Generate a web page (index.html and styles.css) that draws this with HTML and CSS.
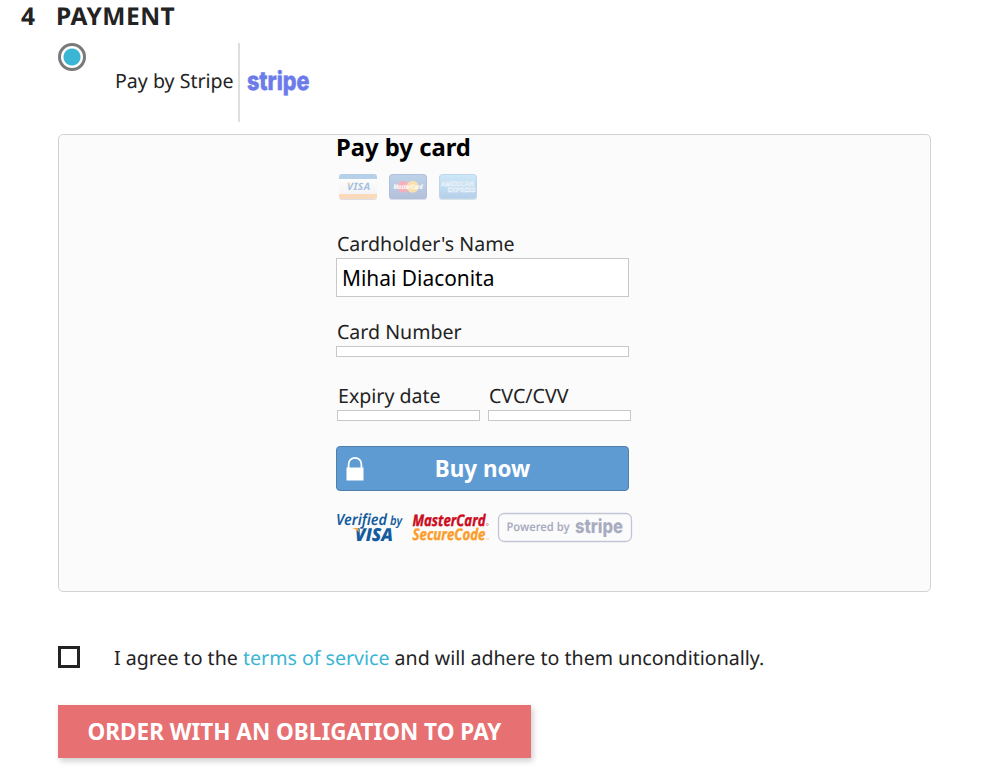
FILE: index.html
```
<!DOCTYPE html>
<html lang="en">
  <head>
    <meta charset="utf-8">
    <title>Payment</title>
    <link rel="stylesheet" href="styles.css">
  </head>

  <body>
    <h1 class="step-title"><span class="step-number">4</span>Payment</h1>

    <div class="content">
      <div class="payment-option">
        <input type="radio" name="payment-option" id="pay-stripe" class="radio" checked>
        <label for="pay-stripe">
          <span>Pay by Stripe</span>
          <svg class="stripe-logo" width="70" height="40" viewBox="0 0 70 40">
            <text x="1" y="27" textLength="62.5" lengthAdjust="spacingAndGlyphs">stripe</text>
          </svg>
        </label>
      </div>

      <div class="card-panel">
        <form class="card-form" onsubmit="return false">
          <h2>Pay by card</h2>

          <div class="cards">
            <svg width="38" height="27" viewBox="0 0 38 27">
              <defs>
                <linearGradient id="visa-bg" x2="0" y2="1">
                  <stop offset="0" stop-color="#fff"/>
                  <stop offset="1" stop-color="#f1f1f3"/>
                </linearGradient>
              </defs>
              <rect y="1" width="38" height="25" rx="3" fill="#dcdfe3"/>
              <rect width="38" height="25" rx="3" fill="url(#visa-bg)"/>
              <path d="M0 5V3a3 3 0 0 1 3-3h32a3 3 0 0 1 3 3v2z" fill="#b5d0e8"/>
              <path d="M0 20h38v2a3 3 0 0 1-3 3H3a3 3 0 0 1-3-3z" fill="#fadabb"/>
              <text class="visa" x="8" y="16.2" textLength="23">VISA</text>
              <path d="M7.5 9h3l1 3z" fill="#f8d5a8"/>
            </svg>
            <svg width="38" height="27" viewBox="0 0 38 27">
              <defs>
                <linearGradient id="mc-bg" x2="0" y2="1">
                  <stop offset="0" stop-color="#bdd3ea"/>
                  <stop offset="1" stop-color="#b4c0da"/>
                </linearGradient>
              </defs>
              <rect y="1" width="38" height="25" rx="3" fill="#d9dde5"/>
              <rect x=".5" y=".5" width="37" height="24" rx="3" fill="url(#mc-bg)" stroke="#b0bfda"/>
              <circle cx="14.3" cy="12.7" r="6" fill="#f4b1bc"/>
              <circle cx="23.7" cy="12.7" r="6" fill="#fae0ac"/>
              <text class="mastercard" x="4.5" y="15" textLength="29" lengthAdjust="spacingAndGlyphs">MasterCard</text>
            </svg>
            <svg width="38" height="27" viewBox="0 0 38 27">
              <defs>
                <linearGradient id="amex-bg" x2="0" y2="1">
                  <stop offset="0" stop-color="#cde8f6"/>
                  <stop offset="1" stop-color="#b6cfe9"/>
                </linearGradient>
              </defs>
              <rect y="1" width="38" height="25" rx="3" fill="#d9e1e9"/>
              <rect x=".5" y=".5" width="37" height="24" rx="3" fill="url(#amex-bg)" stroke="#bcd7ec"/>
              <text class="amex" x="2" y="11.5" textLength="33" lengthAdjust="spacingAndGlyphs">AMERICAN</text>
              <text class="amex" x="8.5" y="18.3" textLength="28" lengthAdjust="spacingAndGlyphs">EXPRESS</text>
            </svg>
          </div>

          <div class="field">
            <label for="name">Cardholder's Name</label>
            <input type="text" id="name" value="Mihai Diaconita">
          </div>

          <div class="field">
            <label>Card Number</label>
            <div class="empty-input"></div>
          </div>

          <div class="field-row">
            <div class="field">
              <label>Expiry date</label>
              <div class="empty-input"></div>
            </div>
            <div class="field">
              <label>CVC/CVV</label>
              <div class="empty-input"></div>
            </div>
          </div>

          <button class="buy">
            <svg class="lock" width="18" height="25" viewBox="0 0 18 25">
              <path d="M2.600 12V8.200a6.400 6.400 0 0 1 12.800 0V12" fill="none" stroke="#fff" stroke-width="1.800"/>
              <rect x=".5" y="11.500" width="17" height="13" fill="#fff"/>
            </svg>
            <span>Buy now</span>
          </button>

          <svg class="trust" width="297" height="34" viewBox="0 0 297 34">
            <g class="verified">
              <text x="0" y="14" font-size="15.500" textLength="51" lengthAdjust="spacingAndGlyphs">Verified</text>
              <text x="54" y="14" font-size="12.500" textLength="12" lengthAdjust="spacingAndGlyphs">by</text>
              <text class="verified-visa" x="19" y="30" textLength="38" lengthAdjust="spacingAndGlyphs">VISA</text>
              <path d="M16 17h6l1.600 5c-2-2.500-4-4-7.600-5z" fill="#faa633"/>
            </g>
            <g class="securecode">
              <text x="76.500" y="15" fill="#cc0b20" stroke="#cc0b20" textLength="73" lengthAdjust="spacingAndGlyphs">MasterCard</text>
              <text x="76.500" y="29.300" fill="#fb9d2a" stroke="#fb9d2a" textLength="73" lengthAdjust="spacingAndGlyphs">SecureCode</text>
              <circle cx="151.300" cy="13.500" r="1" fill="none" stroke="#d9596a" stroke-width=".6"/>
              <path d="M150 28h3" stroke="#fcc88c"/>
            </g>
            <rect x="162.500" y="2.500" width="133" height="28" rx="5.500" fill="none" stroke="#c3c5d6" stroke-width="1.300"/>
            <g class="powered">
              <text x="170.500" y="20" font-size="12" textLength="63" lengthAdjust="spacingAndGlyphs">Powered by</text>
              <text class="wordmark" x="239" y="22" textLength="48" lengthAdjust="spacingAndGlyphs">stripe</text>
            </g>
          </svg>
        </form>
      </div>

      <div class="terms">
        <input type="checkbox" id="agree" class="checkbox">
        <label for="agree">I agree to the <a href="#">terms of service</a> and will adhere to them unconditionally.</label>
      </div>

      <button class="order">Order with an obligation to pay</button>
    </div>
  </body>
</html>
```

FILE: styles.css
```
* {
  box-sizing: border-box;
}

body {
  margin: 0;
  min-height: 779px;
  background: #fff;
  color: #232323;
  font-family: "Noto Sans", sans-serif;
  font-size: 19.58px;
  line-height: 28px;
  text-rendering: geometricPrecision;
}

.step-title {
  display: flex;
  margin: 0;
  padding: 1px 0 0 21px;
  height: 43px;
  font-size: 24.5px;
  line-height: 32px;
  letter-spacing: .5px;
  text-transform: uppercase;
}

.step-number {
  width: 35px;
}

.content {
  margin: 0 69px 0 58px;
}

/* payment option */
.payment-option {
  display: flex;
  height: 79px;
}

.radio,
.checkbox {
  appearance: none;
  flex: none;
  margin: 0;
  background: #fff;
}

.radio {
  width: 28px;
  height: 28px;
  border: 3px solid #7a7a7a;
  border-radius: 50%;
  background: radial-gradient(circle, #3ab5d3 8px, #fff 9px);
}

.payment-option label {
  display: flex;
  align-items: center;
  margin-left: 29px;
}

.payment-option span {
  display: flex;
  align-items: center;
  width: 125px;
  height: 79px;
  padding-bottom: 3px;
  border-right: 2px solid #dedede;
  white-space: nowrap;
}

.stripe-logo {
  margin-left: 6px;
  font-family: Inter, sans-serif;
  font-size: 26px;
  font-weight: 800;
  fill: #6c7bea;
  stroke: #6c7bea;
  stroke-width: .5;
}

/* card form */
.card-panel {
  height: 458px;
  margin-top: 12px;
  border: 1px solid #d2d2d2;
  border-radius: 5px;
  background: #fbfbfb;
}

.card-form {
  width: 293px;
  margin-left: 277px;
}

.card-form h2 {
  margin: 0;
  color: #000;
  font-size: 23.8px;
  line-height: 25px;
}

.cards {
  display: flex;
  gap: 12px;
  height: 27px;
  margin: 14px 0 29px 3px;
}

.cards svg,
.trust,
.stripe-logo {
  overflow: visible;
}

.visa {
  font-size: 10px;
  font-weight: bold;
  font-style: italic;
  fill: #a2bee0;
}

.mastercard {
  font-size: 6.5px;
  font-weight: bold;
  font-style: italic;
  fill: #fff;
}

.amex {
  font-size: 6px;
  font-weight: bold;
  fill: #c9deef;
  stroke: #f2f8fc;
  stroke-width: .4;
}

.field label {
  display: block;
  padding-left: 1px;
}

.field input {
  display: block;
  width: 100%;
  height: 39px;
  margin-bottom: 21px;
  padding: 0 5px 0;
  border: 1px solid #c8c8c8;
  border-radius: 0;
  background: #fff;
  color: #000;
  font: inherit;
  font-size: 20.9px;
}

.empty-input {
  height: 11px;
  border: 1px solid #c8c8c8;
  background: #fff;
}

.field-row {
  display: flex;
  gap: 8px;
  width: 294px;
  margin: 25px 0 25px 1px;
}

.field-row .field {
  flex: 1;
}

.buy {
  display: grid;
  grid-template-columns: 18px 1fr 18px;
  align-items: center;
  width: 100%;
  height: 45px;
  padding: 0 9px;
  border: 1px solid #527fa9;
  border-radius: 4px;
  background: #5e9bd3;
  color: #fff;
  font: bold 22.4px "Noto Sans", sans-serif;
}

.trust {
  display: block;
  margin-top: 20px;
}

.verified {
  fill: #135b9e;
  font-weight: 600;
  font-style: italic;
}

.verified-visa {
  font-family: "Open Sans", sans-serif;
  font-size: 18px;
  font-weight: 800;
}

.securecode {
  font-family: "Open Sans", sans-serif;
  font-size: 16px;
  font-weight: bold;
  font-style: italic;
}

.securecode text {
  stroke-width: .4;
}

.powered {
  fill: #a9abc1;
  font-weight: 600;
}

.wordmark {
  font-family: Inter, sans-serif;
  font-size: 19.5px;
  font-weight: 800;
}

/* terms and order button */
.terms {
  display: flex;
  align-items: center;
  height: 28px;
  margin-top: 52px;
}

.checkbox {
  width: 22px;
  height: 22px;
  margin-bottom: 2px;
  border: 3px solid #232323;
}

.terms label {
  margin-left: 34px;
}

.terms a {
  color: #3ab5d3;
  text-decoration: none;
}

.order {
  display: block;
  width: 473px;
  height: 53px;
  margin-top: 33px;
  padding: 0;
  border: 0;
  background: #e77073;
  box-shadow: 2px 3px 6px rgba(0, 0, 0, .2);
  color: #fff;
  font: bold 22.5px "Noto Sans", sans-serif;
  text-transform: uppercase;
}
```
